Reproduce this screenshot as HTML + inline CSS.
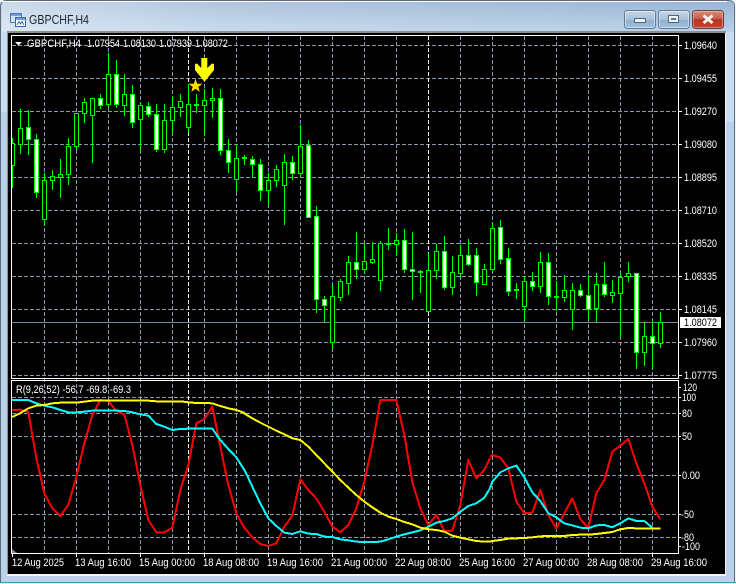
<!DOCTYPE html>
<html>
<head>
<meta charset="utf-8">
<title>GBPCHF,H4</title>
<style>
html,body{margin:0;padding:0;background:#fff;overflow:hidden}
svg{display:block}
text{font-family:"Liberation Sans",sans-serif;font-size:11px;fill:#fff}
</style>
</head>
<body>
<svg width="736" height="584" viewBox="0 0 736 584" xmlns="http://www.w3.org/2000/svg">
<defs>
<linearGradient id="tb" x1="0" y1="0" x2="0" y2="1"><stop offset="0" stop-color="#9ab5d3"/><stop offset="1" stop-color="#b9d1ea"/></linearGradient>
<linearGradient id="gl" x1="0" y1="0" x2="1" y2="0"><stop offset="0" stop-color="#fff" stop-opacity=".5"/><stop offset=".3" stop-color="#fff" stop-opacity=".22"/><stop offset="1" stop-color="#fff" stop-opacity="0"/></linearGradient>
<linearGradient id="btn" x1="0" y1="0" x2="0" y2="1"><stop offset="0" stop-color="#c6d7e8"/><stop offset=".5" stop-color="#a9c1da"/><stop offset=".55" stop-color="#8fafcf"/><stop offset="1" stop-color="#a5c3e0"/></linearGradient>
<linearGradient id="cls" x1="0" y1="0" x2="0" y2="1"><stop offset="0" stop-color="#d98f7e"/><stop offset=".45" stop-color="#c8604c"/><stop offset=".5" stop-color="#b83420"/><stop offset="1" stop-color="#c2452f"/></linearGradient>
<clipPath id="mc"><rect x="12" y="36" width="666" height="342"/></clipPath>
</defs>

<!-- window frame -->
<rect x="0" y="0" width="736" height="584" fill="#f4f6f8"/>
<path d="M0 6Q0 0 6 0H728Q735 0 735 6V582H0Z" fill="#b9d1ea"/>
<path d="M1.500 7Q1.500 1.500 7 1.500H727Q733.500 1.500 733.500 7V32H1.500Z" fill="url(#tb)"/>
<path d="M1.500 7Q1.500 1.500 7 1.500H727Q733.500 1.500 733.500 7V32H1.500Z" fill="url(#gl)"/>
<path d="M0.500 582V6.500Q0.500 0.500 6.500 0.500H728Q734.500 0.500 734.500 6.500V582" fill="none" stroke="#5a6a78"/>
<path d="M2 1.500H727" stroke="#fff" stroke-width="1" fill="none"/>
<rect x="1" y="32" width="6" height="80" fill="#fff" opacity=".25"/>
<rect x="726" y="32" width="8" height="90" fill="#fff" opacity=".25"/>
<rect x="0" y="582" width="736" height="1" fill="#3a9ab8"/>
<rect x="0" y="583" width="736" height="1" fill="#d8eaf2"/>

<!-- title icon -->
<rect x="10.500" y="13.500" width="11" height="9" fill="#d5e4f6" stroke="#4a7ab5"/>
<rect x="11" y="14" width="10" height="2" fill="#6f9fd8"/>
<rect x="15.500" y="17.500" width="10" height="9" fill="#fff" stroke="#3a6aa5"/>
<rect x="16" y="18" width="9" height="2" fill="#6f9fd8"/>
<path d="M17 25L19 21.500L20.500 24L22 21.500L24 25" fill="none" stroke="#2f6fb5"/>
<text x="29" y="24" textLength="60" lengthAdjust="spacingAndGlyphs" style="font-size:12.500px;fill:#1c2630">GBPCHF,H4</text>

<!-- window buttons -->
<rect x="624.500" y="10.500" width="31" height="18" rx="3" fill="url(#btn)" stroke="#5f7a95"/>
<rect x="625.500" y="11.500" width="29" height="16" rx="2" fill="none" stroke="#fff" stroke-opacity=".45"/>
<rect x="634.500" y="18.500" width="11" height="4" fill="#eef3f8" stroke="#4f6479"/>
<rect x="658.500" y="10.500" width="31" height="18" rx="3" fill="url(#btn)" stroke="#5f7a95"/>
<rect x="659.500" y="11.500" width="29" height="16" rx="2" fill="none" stroke="#fff" stroke-opacity=".45"/>
<rect x="668.500" y="15.500" width="10" height="7" fill="#eef3f8" stroke="#4f6479"/>
<rect x="671" y="18" width="5" height="2" fill="#5f7a95"/>
<rect x="692.500" y="10.500" width="31" height="18" rx="3" fill="url(#cls)" stroke="#6e3a34"/>
<rect x="693.500" y="11.500" width="29" height="16" rx="2" fill="none" stroke="#fff" stroke-opacity=".35"/>
<path d="M703.500 15.500L712.500 23M712.500 15.500L703.500 23" stroke="#f4f0ee" stroke-width="3" fill="none"/>

<!-- client area -->
<rect x="7" y="31" width="719" height="2" fill="#8b8f94"/>
<rect x="7" y="31" width="1" height="544" fill="#8b8f94"/>
<rect x="8" y="33" width="717" height="541" fill="#000"/>
<rect x="725" y="33" width="1" height="542" fill="#eef3f8"/>
<rect x="7" y="574" width="719" height="2" fill="#f2f6fa"/>

<!-- grid -->
<g stroke="#8899aa" fill="none" stroke-dasharray="4 2">
<path d="M12 45.500H678M12 78.500H678M12 111.500H678M12 144.500H678M12 177.500H678M12 210.500H678M12 243.500H678M12 276.500H678M12 309.500H678M12 342.500H678M12 375.500H678"/>
<path d="M12 397.500H678M12 413.500H678M12 436.500H678M12 475.500H678M12 514.500H678M12 537.500H678"/>
<path d="M44.500 36V553M76.500 36V553M108.500 36V553M140.500 36V553M172.500 36V553M204.500 36V553M236.500 36V553M268.500 36V553M300.500 36V553M332.500 36V553M364.500 36V553M396.500 36V553M460.500 36V553M492.500 36V553M524.500 36V553M556.500 36V553M588.500 36V553M620.500 36V553M652.500 36V553"/>
</g>
<path d="M188.500 36V553M428.500 36V553" stroke="#fff" fill="none" stroke-dasharray="4 2"/>
<rect x="12" y="322" width="666" height="1" fill="#778899"/>

<!-- candles -->
<g clip-path="url(#mc)" shape-rendering="crispEdges">
<path stroke="#0f0" fill="none" d="M12.500 138V188M20.500 109V154M28.500 110V155M36.500 134V198M44.500 173V226M52.500 170V190M60.500 159V198M68.500 138V185M76.500 113V150M84.500 98V123M92.500 98V163M100.500 94V109M108.500 53V108M116.500 60V108M124.500 74V116M132.500 85V128M140.500 102V150M148.500 102V117M156.500 104V152M164.500 104V153M172.500 96V133M180.500 94V117M188.500 84V133M196.500 94V113M204.500 89V135M212.500 88V118M220.500 89V155M228.500 139V173M236.500 145V192M244.500 155V165M252.500 156V178M260.500 159V201M268.500 173V205M276.500 165V187M284.500 154V225M292.500 156V180M300.500 125V177M308.500 140V217M316.500 206V313M324.500 296V322M332.500 285V349M340.500 279V301M348.500 256V295M356.500 232V279M364.500 243V274M372.500 242V264M380.500 241V291M388.500 228V250M396.500 233V256M404.500 229V273M412.500 232V300M420.500 270V293M428.500 253V311M436.500 244V279M444.500 236V290M452.500 256V295M460.500 245V278M468.500 239V266M476.500 248V296M484.500 264V285M492.500 222V272M500.500 220V264M508.500 248V296M516.500 283V299M524.500 276V322M532.500 272V291M540.500 252V293M548.500 253V305M556.500 281V311M564.500 275V302M572.500 283V330M580.500 284V297M588.500 275V321M596.500 273V322M604.500 262V297M612.500 280V303M620.500 273V338M628.500 262V282M636.500 273V369M644.500 322V366M652.500 321V370M660.500 312V348"/>
<path stroke="#0f0" fill="#000" d="M10.500 143.500h4V165.500h-4zM18.500 128.500h4V144.500h-4zM42.500 180.500h4V219.500h-4zM50.500 176.500h4V180.500h-4zM58.500 174.500h4V177.500h-4zM66.500 146.500h4V174.500h-4zM74.500 113.500h4V146.500h-4zM82.500 102.500h4V113.500h-4zM90.500 98.500h4V115.500h-4zM106.500 74.500h4V104.500h-4zM122.500 94.500h4V105.500h-4zM138.500 105.500h4V119.500h-4zM162.500 120.500h4V149.500h-4zM170.500 107.500h4V120.500h-4zM178.500 101.500h4V107.500h-4zM186.500 104.500h4V127.500h-4zM202.500 100.500h4V105.500h-4zM210.500 98.500h4V100.500h-4zM234.500 158.500h4V179.500h-4zM266.500 180.500h4V190.500h-4zM274.500 169.500h4V180.500h-4zM282.500 162.500h4V185.500h-4zM298.500 146.500h4V173.500h-4zM330.500 296.500h4V342.500h-4zM338.500 281.500h4V297.500h-4zM346.500 262.500h4V283.500h-4zM362.500 261.500h4V269.500h-4zM370.500 259.500h4V262.500h-4zM378.500 243.500h4V280.500h-4zM394.500 240.500h4V244.500h-4zM426.500 270.500h4V311.500h-4zM434.500 251.500h4V270.500h-4zM450.500 272.500h4V287.500h-4zM458.500 255.500h4V273.500h-4zM482.500 269.500h4V284.500h-4zM490.500 228.500h4V269.500h-4zM522.500 281.500h4V306.500h-4zM538.500 262.500h4V286.500h-4zM562.500 290.500h4V297.500h-4zM570.500 290.500h4V309.500h-4zM594.500 284.500h4V308.500h-4zM610.500 292.500h4V295.500h-4zM618.500 277.500h4V293.500h-4zM626.500 273.500h4V276.500h-4zM642.500 336.500h4V352.500h-4zM658.500 322.500h4V343.500h-4z"/>
<path stroke="#0f0" fill="#fff" d="M26.500 127.500h4V139.500h-4zM34.500 139.500h4V192.500h-4zM98.500 98.500h4V105.500h-4zM114.500 74.500h4V104.500h-4zM130.500 94.500h4V122.500h-4zM146.500 106.500h4V114.500h-4zM154.500 114.500h4V149.500h-4zM218.500 98.500h4V150.500h-4zM226.500 150.500h4V162.500h-4zM250.500 159.500h4V164.500h-4zM258.500 164.500h4V190.500h-4zM290.500 162.500h4V173.500h-4zM306.500 145.500h4V217.500h-4zM314.500 216.500h4V299.500h-4zM322.500 299.500h4V305.500h-4zM354.500 262.500h4V269.500h-4zM402.500 240.500h4V269.500h-4zM410.500 269.500h4V271.500h-4zM442.500 251.500h4V287.500h-4zM466.500 255.500h4V264.500h-4zM474.500 255.500h4V282.500h-4zM498.500 227.500h4V259.500h-4zM506.500 258.500h4V291.500h-4zM530.500 281.500h4V286.500h-4zM546.500 262.500h4V296.500h-4zM578.500 290.500h4V295.500h-4zM586.500 295.500h4V309.500h-4zM602.500 284.500h4V294.500h-4zM634.500 273.500h4V352.500h-4zM650.500 336.500h4V343.500h-4z"/>
<path stroke="#0f0" stroke-width="2" fill="none" d="M194 105h5M242 158h5M386 244h5M418 272h5M514 290h5M554 297h5"/>
</g>

<!-- arrow & star -->
<polygon points="201.300,58 207.300,58 207.300,68 212,63.500 214,64 214,70 204.500,81.700 195,70 195,64 197,63.500 201.300,68" fill="#ff0"/>
<polygon points="195.500,78.700 197.200,83.700 202.400,83.700 198.300,86.900 199.800,91.900 195.500,88.900 191.200,91.900 192.700,86.900 188.600,83.700 193.800,83.700" fill="#ffe000"/>

<!-- indicators -->
<g fill="none" stroke-width="6" stroke-linejoin="round" shape-rendering="crispEdges">
<g transform="translate(0 375) scale(.33333)">
<polyline stroke="#f00" points="36,105 60,104 85,110 109,250 133,355 157,400 181,423 205,390 229,305 253,205 277,120 301,75 325,78 349,108 373,118 397,210 421,330 445,435 469,472 493,472 517,458 541,345 565,270 589,145 613,132 637,95 661,215 685,330 709,415 735,462"/>
<polyline stroke="#0ff" points="36,75 60,75 85,75 109,85 133,92 157,97 181,105 205,112 229,112 253,110 277,107 301,107 325,107 349,107 373,108 397,112 421,118 445,122 469,147 493,155 517,165 541,162 565,161 589,161 613,161 637,161 661,195 685,222 709,247 735,288"/>
</g>
<g transform="translate(245 375) scale(.33333)">
<polyline stroke="#f00" points="0,460 22,487 46,507 70,513 94,505 118,455 142,422 166,313 190,345 214,370 238,410 262,455 286,472 310,450 334,400 358,320 382,210 406,75 430,75 454,75 478,180 502,322 526,400 550,450 574,420 598,468 622,467 646,390 670,255 694,310 718,285 735,250"/>
<polyline stroke="#0ff" points="0,288 22,335 46,385 70,430 94,453 118,473 142,477 166,469 190,476 214,477 238,485 262,486 286,493 310,496 334,500 358,501 382,501 406,500 430,493 454,485 478,478 502,472 526,466 550,455 574,443 598,438 622,430 646,410 670,393 694,385 718,368 735,340"/>
</g>
<g transform="translate(490 375) scale(.33333)">
<polyline stroke="#f00" points="0,245 7,240 31,248 55,280 79,380 103,415 127,413 151,345 175,420 199,460 223,415 247,370 271,433 295,458 319,355 343,315 367,230 391,212 415,192 439,265 463,325 487,395 511,433"/>
<polyline stroke="#0ff" points="0,340 7,320 31,292 55,280 79,272 103,307 127,352 151,378 175,415 199,427 223,445 247,451 271,458 295,460 319,451 343,450 367,457 391,445 415,430 439,438 463,438 487,458"/>
</g>
<g transform="translate(0 375) scale(.33333)">
<polyline stroke="#ff0" points="36,126 60,115 85,100 109,92 133,90 157,85 181,83 205,83 229,83 253,80 277,77 301,77 325,77 445,77 469,79 541,79 565,82 589,84 613,84 637,85 661,93 685,100 709,105 735,114"/>
</g>
<g transform="translate(245 375) scale(.33333)">
<polyline stroke="#ff0" points="-3,115 22,130 46,143 70,155 94,167 118,178 142,190 166,195 190,215 214,240 238,265 262,290 286,315 310,338 334,360 358,380 382,397 406,413 430,425 454,432 478,441 502,448 526,458 550,463 574,465 598,470 622,482 646,488 670,493 694,498 718,500 735,500"/>
</g>
<g transform="translate(490 375) scale(.33333)">
<polyline stroke="#ff0" points="0,500 7,498 31,495 55,491 79,490 103,489 127,487 151,484 175,483 199,483 223,483 247,480 271,479 295,479 319,477 343,474 367,471 391,463 415,459 439,460 463,461 487,461 511,461"/>
</g>
</g>

<!-- frames -->
<path d="M11.500 35.500H678.500V378.500H11.500ZM11.500 380.500H678.500V553.500H11.500Z" fill="none" stroke="#fff"/>
<polygon points="12,549 12,553 17,553" fill="#778899"/>

<!-- chart header -->
<polygon points="15,42 22,42 18.500,45.500" fill="#fff"/>
<text x="27" y="47" textLength="54" lengthAdjust="spacingAndGlyphs">GBPCHF,H4</text>
<text x="87" y="47" textLength="33" lengthAdjust="spacingAndGlyphs">1.07954</text>
<text x="123" y="47" textLength="33" lengthAdjust="spacingAndGlyphs">1.08130</text>
<text x="159" y="47" textLength="33" lengthAdjust="spacingAndGlyphs">1.07939</text>
<text x="195" y="47" textLength="33" lengthAdjust="spacingAndGlyphs">1.08072</text>
<text x="16" y="393" textLength="115" lengthAdjust="spacingAndGlyphs">R(9,26,52) -56.7 -69.8 -69.3</text>

<!-- price axis -->
<path stroke="#fff" fill="none" d="M679 45.500h3M679 78.500h3M679 111.500h3M679 144.500h3M679 177.500h3M679 210.500h3M679 243.500h3M679 276.500h3M679 309.500h3M679 342.500h3M679 375.500h3M679 387.500h2M679 397.500h2M679 413.500h2M679 436.500h2M679 475.500h2M679 514.500h2M679 537.500h2M679 546.500h2"/>
<g>
<text x="684" y="49" textLength="33" lengthAdjust="spacingAndGlyphs">1.09640</text>
<text x="684" y="82" textLength="33" lengthAdjust="spacingAndGlyphs">1.09455</text>
<text x="684" y="115" textLength="33" lengthAdjust="spacingAndGlyphs">1.09270</text>
<text x="684" y="148" textLength="33" lengthAdjust="spacingAndGlyphs">1.09080</text>
<text x="684" y="181" textLength="33" lengthAdjust="spacingAndGlyphs">1.08895</text>
<text x="684" y="214" textLength="33" lengthAdjust="spacingAndGlyphs">1.08710</text>
<text x="684" y="247" textLength="33" lengthAdjust="spacingAndGlyphs">1.08520</text>
<text x="684" y="280" textLength="33" lengthAdjust="spacingAndGlyphs">1.08335</text>
<text x="684" y="313" textLength="33" lengthAdjust="spacingAndGlyphs">1.08145</text>
<text x="684" y="346" textLength="33" lengthAdjust="spacingAndGlyphs">1.07960</text>
<text x="684" y="379" textLength="33" lengthAdjust="spacingAndGlyphs">1.07775</text>
</g>
<rect x="680" y="317" width="41" height="11" fill="#fff"/>
<text x="684" y="326" textLength="33" lengthAdjust="spacingAndGlyphs" style="fill:#000">1.08072</text>
<text x="683" y="391" textLength="14" lengthAdjust="spacingAndGlyphs">120</text>
<text x="682" y="401" textLength="14" lengthAdjust="spacingAndGlyphs">100</text>
<text x="682" y="417" textLength="10" lengthAdjust="spacingAndGlyphs">80</text>
<text x="682" y="440" textLength="10" lengthAdjust="spacingAndGlyphs">50</text>
<text x="682" y="479" textLength="18" lengthAdjust="spacingAndGlyphs">0.00</text>
<text x="681" y="518" textLength="13" lengthAdjust="spacingAndGlyphs">-50</text>
<text x="681" y="541" textLength="13" lengthAdjust="spacingAndGlyphs">-80</text>
<text x="682" y="550" textLength="18" lengthAdjust="spacingAndGlyphs">-100</text>

<!-- time axis -->
<path stroke="#fff" fill="none" d="M12.500 553v4M76.500 553v4M140.500 553v4M204.500 553v4M268.500 553v4M332.500 553v4M396.500 553v4M460.500 553v4M524.500 553v4M588.500 553v4M652.500 553v4"/>
<text x="12" y="566" textLength="52" lengthAdjust="spacingAndGlyphs">12 Aug 2025</text>
<text x="75" y="566" textLength="56" lengthAdjust="spacingAndGlyphs">13 Aug 16:00</text>
<text x="139" y="566" textLength="56" lengthAdjust="spacingAndGlyphs">15 Aug 00:00</text>
<text x="203" y="566" textLength="56" lengthAdjust="spacingAndGlyphs">18 Aug 08:00</text>
<text x="267" y="566" textLength="56" lengthAdjust="spacingAndGlyphs">19 Aug 16:00</text>
<text x="331" y="566" textLength="56" lengthAdjust="spacingAndGlyphs">21 Aug 00:00</text>
<text x="395" y="566" textLength="56" lengthAdjust="spacingAndGlyphs">22 Aug 08:00</text>
<text x="459" y="566" textLength="56" lengthAdjust="spacingAndGlyphs">25 Aug 16:00</text>
<text x="523" y="566" textLength="56" lengthAdjust="spacingAndGlyphs">27 Aug 00:00</text>
<text x="587" y="566" textLength="56" lengthAdjust="spacingAndGlyphs">28 Aug 08:00</text>
<text x="651" y="566" textLength="56" lengthAdjust="spacingAndGlyphs">29 Aug 16:00</text>
</svg>
</body>
</html>
